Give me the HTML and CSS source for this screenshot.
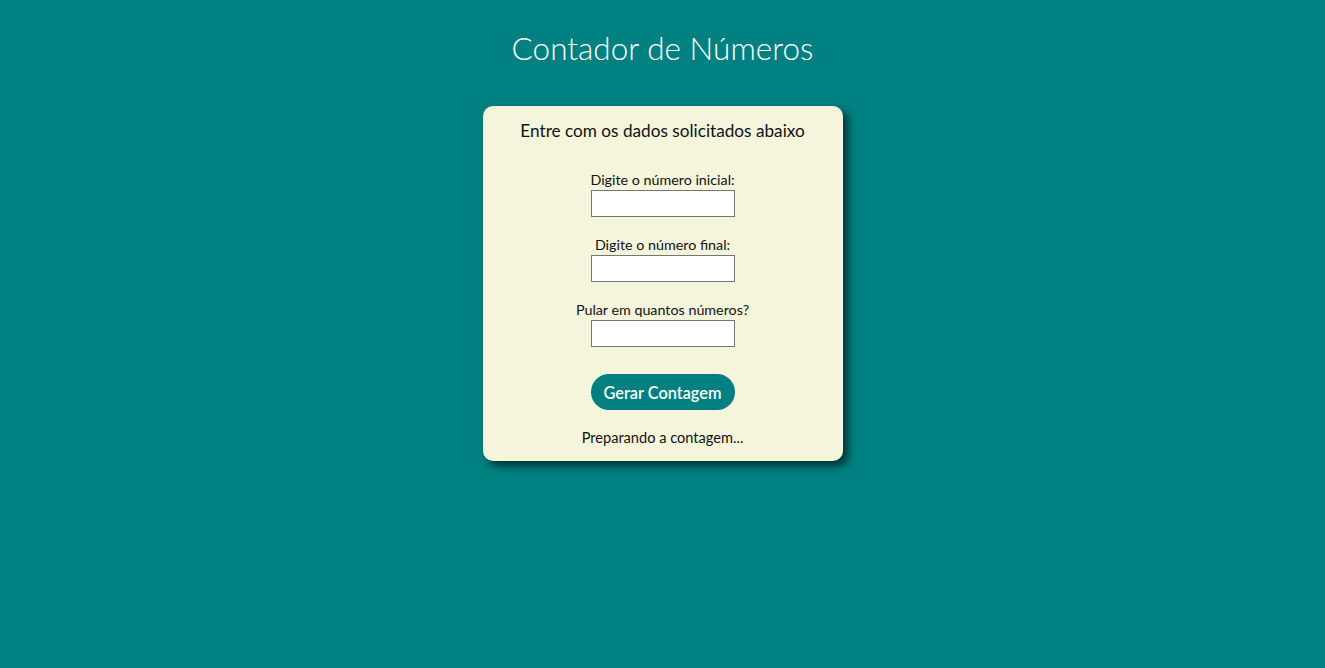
FILE: index.html
```html
<!DOCTYPE html>
<html lang="pt-BR">
<head>
<meta charset="utf-8">
<title>Contador de Números</title>
<link rel="stylesheet" href="styles.css">
</head>
<body>
<header class="top">
  <h1 class="title">Contador de Números</h1>
</header>
<main class="card">
  <p class="lead">Entre com os dados solicitados abaixo</p>
  <div class="field first">
    <label class="label" for="ini">Digite o número inicial:</label>
    <input class="input" type="text" id="ini">
  </div>
  <div class="field">
    <label class="label" for="fim">Digite o número final:</label>
    <input class="input" type="text" id="fim">
  </div>
  <div class="field">
    <label class="label" for="passo">Pular em quantos números?</label>
    <input class="input" type="text" id="passo">
  </div>
  <button class="btn" type="button">Gerar Contagem</button>
  <p class="result">Preparando a contagem...</p>
</main>
</body>
</html>
```
FILE: styles.css
```css
html, body {
  margin: 0;
  padding: 0;
}
body {
  background: #008080;
  min-height: 668px;
  font-family: Lato, "Noto Sans", sans-serif;
  display: flex;
  flex-direction: column;
  align-items: center;
  padding-top: 28px;
  box-sizing: border-box;
}
.top {
  display: flex;
  justify-content: center;
}
.title {
  margin: 0;
  color: #ffffff;
  font-weight: 300;
  font-size: 31.5px;
  line-height: 40px;
  height: 40px;
}
.card {
  margin-top: 38px;
  width: 360px;
  box-sizing: border-box;
  background: #f5f5dc;
  border-radius: 10px;
  box-shadow: 5px 5px 8px rgba(0, 0, 0, 0.6);
  padding: 14px 0 14px;
  display: flex;
  flex-direction: column;
  align-items: center;
  color: #111;
}
.lead {
  margin: 0;
  font-size: 17.2px;
  line-height: 22px;
}
.field {
  align-self: stretch;
  display: flex;
  flex-direction: column;
  align-items: center;
  margin-top: 19px;
}
.field.first {
  margin-top: 29px;
}
.label {
  font-size: 14.3px;
  line-height: 18px;
}
.input {
  margin-top: 1px;
  width: 144px;
  height: 27px;
  box-sizing: border-box;
  border: 1px solid #767676;
  background: #fff;
  padding: 0;
}
.btn {
  margin-top: 27px;
  width: 144px;
  height: 36px;
  border: none;
  border-radius: 18px;
  background: #008080;
  color: #fff;
  font-family: Lato, "Noto Sans", sans-serif;
  font-size: 16.3px;
  font-weight: 600;
  padding: 0;
}
.result {
  margin: 19px 0 0;
  font-size: 14.6px;
  line-height: 18px;
}
```
